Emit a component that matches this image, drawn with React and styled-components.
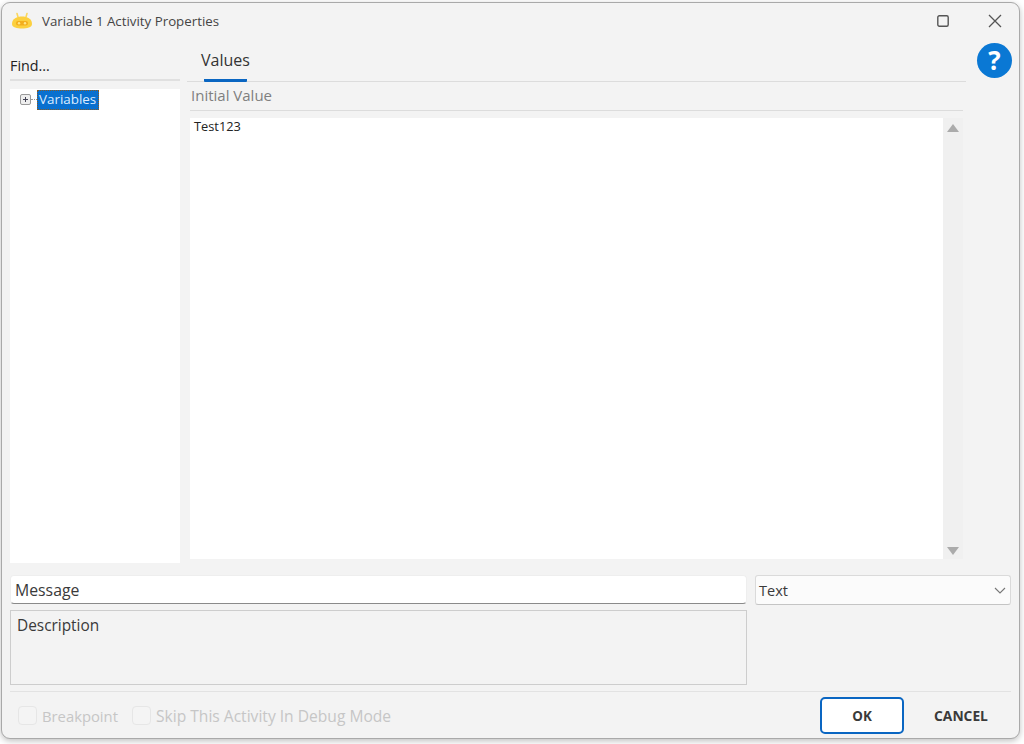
import React from "react";
import styled, { createGlobalStyle } from "styled-components";

const Global = createGlobalStyle`
  html, body { margin: 0; padding: 0; background: #fff; }
  body { width: 1024px; height: 744px; overflow: hidden; font-family: "Open Sans", "Noto Sans", "Liberation Sans", sans-serif; }
  * { box-sizing: border-box; }
`;
const Page = styled.div`
  width: 1024px; height: 744px; padding: 2px 4px 5px 1px; background: #fff;
`;
const Win = styled.div`
  width: 1019px; height: 737px; background: #f3f3f3; border: 1px solid #a9a9a9; border-radius: 9px;
  box-shadow: 0 2px 6px rgba(0,0,0,.25); display: flex; flex-direction: column;
`;
const TitleBar = styled.div`
  height: 35px; flex: none; display: flex; align-items: center; padding: 0 16px 0 9px; color: #444;
`;
const TitleText = styled.div`
  font-size: 13.3px; margin-left: 9px; flex: 1; color: #454545;
`;
const WinBtn = styled.button`
  border: 0; background: none; padding: 0; width: 16px; height: 16px; display: flex; margin-left: ${p => p.$gap}px;
`;
const Main = styled.div`
  flex: 1; min-height: 0; display: grid; grid-template-columns: 170px 779px 1fr; padding: 0 8px 0 8px; column-gap: 7px;
`;
const Side = styled.div`
  display: flex; flex-direction: column; height: 525px;
`;
const Find = styled.div`
  height: 43px; font-size: 14.3px; color: #222; border-bottom: 2px solid #e0e0e0; display: flex; align-items: flex-end; padding-bottom: 4px;
`;
const Tree = styled.div`
  margin-top: 8px; flex: 1; background: #fff; padding: 1px 0 0 10px; display: flex; align-items: flex-start;
`;
const TreeLine = styled.div`
  width: 6px; height: 1px; border-top: 1px dotted #999; margin-top: 9px;
`;
const Expander = styled.div`
  width: 11px; height: 11px; margin-top: 4px; border: 1px solid #9a9a9a; border-radius: 2px; background: #eee; position: relative;
  &::before { content: ""; position: absolute; left: 2px; right: 2px; top: 4px; height: 1px; background: #445; }
  &::after { content: ""; position: absolute; top: 2px; bottom: 2px; left: 4px; width: 1px; background: #445; }
`;
const TreeLabel = styled.div`
  background: #0a70cf; color: #dcecff; font-size: 13.4px; line-height: 19px; height: 20px; width: 62px; padding: 0 0 0 2px; outline: 1px dotted #8a5a20; outline-offset: -1px; white-space: nowrap;
`;
const Content = styled.div`
  display: flex; flex-direction: column; height: 521px;
`;
const TabBar = styled.div`
  height: 44px; border-bottom: 1px solid #dcdcdc; display: flex; align-items: flex-end; padding-left: 17px;
`;
const Tab = styled.div`
  font-size: 16px; color: #333; height: 44px; width: 43px; display: flex; justify-content: center; padding-top: 11px; white-space: nowrap; border-bottom: 3px solid #0a66c2; border-radius: 1px; margin-bottom: -1px;
`;
const SubHead = styled.div`
  margin: 0 3px 7px; height: 29px; border-bottom: 1px solid #dcdcdc; font-size: 15px; color: #7f7f7f; display: flex; align-items: center; padding-bottom: 2px; padding-left: 1px;
`;
const EditorRow = styled.div`
  margin: 0 3px; flex: 1; display: flex;
`;
const Editor = styled.div`
  flex: 1; background: #fff; font-size: 12.8px; line-height: 17px; color: #222; padding: 0 4px;
`;
const Scroll = styled.div`
  width: 20px; background: #f0f0f0; display: flex; flex-direction: column; justify-content: space-between; align-items: center; padding: 6px 0 4px;
`;
const Help = styled.div`
  margin-top: 5px; margin-left: 4px; width: 35px; height: 35px; border-radius: 50%; background: #0a78d4; color: #fff; font: 700 26px/35px "Open Sans", sans-serif; text-align: center;
`;
const Form = styled.div`
  padding: 11px 8px 0 8px; display: grid; grid-template-columns: 737px 256px; column-gap: 8px;
`;
const Message = styled.div`
  height: 29px; background: #fff; border-radius: 4px; border: 1px solid #eee; border-bottom-color: #8a8a8a;
  font-size: 15.8px; color: #3a3a3a; display: flex; align-items: center; padding: 1px 4px 0;
`;
const Select = styled.div`
  height: 30px; background: #fbfbfb; border: 1px solid #dadada; border-bottom-color: #c4c4c4; border-radius: 3px; display: flex; align-items: center; justify-content: space-between; padding: 0 3px; font-size: 14.5px; color: #3a3a3a;
`;
const Description = styled.div`
  grid-column: 1; margin-top: 5px; height: 75px; border: 1px solid #cdcdcd; font-size: 15.4px; color: #3a3a3a; padding: 4px 6px;
`;
const Footer = styled.div`
  margin: 6px 8px 0; border-top: 1px solid #e2e2e2; padding: 5px 0 4px; display: flex; align-items: center; height: 47px;
`;
const Check = styled.label`
  display: flex; align-items: center; font-size: ${p => p.$size}px; color: #c6c6c6; margin-left: ${p => p.$gap}px; white-space: nowrap;
`;
const Box = styled.span`
  width: 19px; height: 19px; border: 1px solid #e6e6e6; border-radius: 4px; background: #f4f4f4; margin-right: 5px;
`;
const Spacer = styled.div` flex: 1; `;
const Ok = styled.button`
  width: 84px; height: 37px; background: #fff; border: 2px solid #0a66c2; border-radius: 5px; font: 700 13.4px "Open Sans", sans-serif; color: #3a3a3a; padding: 0;
`;
const Cancel = styled.button`
  width: 84px; height: 37px; margin: 0 8px 0 15px; background: none; border: 0; font: 700 13.8px "Open Sans", sans-serif; color: #3a3a3a; padding: 0;
`;

const Logo = () => (
  <svg width="22" height="18" viewBox="0 0 22 18">
    <path d="M7 5 L6 1.5 M15 5 L16 1.5" stroke="#fbd75c" strokeWidth="1.6" strokeLinecap="round" />
    <path d="M1 12 C1 6.5 6 4.5 11 4.5 C16 4.5 21 6.5 21 12 C21 15.5 16 16.5 11 16.5 C6 16.5 1 15.5 1 12 Z" fill="#fcd03f" />
    <rect x="5" y="9" width="12" height="4.5" rx="2.2" fill="#f3ae1c" />
    <circle cx="8" cy="11.2" r="1.2" fill="#ffe68a" />
    <circle cx="14" cy="11.2" r="1.2" fill="#ffe68a" />
  </svg>
);

export default function App() {
  return (
    <Page>
      <Global />
      <Win>
        <TitleBar>
          <Logo />
          <TitleText>Variable 1 Activity Properties</TitleText>
          <WinBtn>
            <svg width="16" height="16" viewBox="0 0 16 16"><rect x="2.8" y="2.8" width="10.4" height="10.4" rx="1.5" fill="none" stroke="#555" strokeWidth="1.4" /></svg>
          </WinBtn>
          <WinBtn $gap={36}>
            <svg width="16" height="16" viewBox="0 0 16 16"><path d="M2 2 L14 14 M14 2 L2 14" stroke="#555" strokeWidth="1.3" /></svg>
          </WinBtn>
        </TitleBar>
        <Main>
          <Side>
            <Find>Find...</Find>
            <Tree>
              <Expander />
              <TreeLine />
              <TreeLabel>Variables</TreeLabel>
            </Tree>
          </Side>
          <Content>
            <TabBar><Tab>Values</Tab></TabBar>
            <SubHead>Initial Value</SubHead>
            <EditorRow>
              <Editor>Test123</Editor>
              <Scroll>
                <svg width="12" height="8" viewBox="0 0 12 8"><path d="M6 0 L12 8 L0 8 Z" fill="#ababab" /></svg>
                <svg width="12" height="8" viewBox="0 0 12 8"><path d="M0 0 L12 0 L6 8 Z" fill="#ababab" /></svg>
              </Scroll>
            </EditorRow>
          </Content>
          <Help>?</Help>
        </Main>
        <Form>
          <Message>Message</Message>
          <Select>
            Text
            <svg width="14" height="14" viewBox="0 0 14 14"><path d="M2 5 L7 10 L12 5" fill="none" stroke="#777" strokeWidth="1.1" /></svg>
          </Select>
          <Description>Description</Description>
        </Form>
        <Footer>
          <Check $gap={8} $size={14.8}><Box />Breakpoint</Check>
          <Check $gap={14} $size={15.6}><Box />Skip This Activity In Debug Mode</Check>
          <Spacer />
          <Ok>OK</Ok>
          <Cancel>CANCEL</Cancel>
        </Footer>
      </Win>
    </Page>
  );
}
